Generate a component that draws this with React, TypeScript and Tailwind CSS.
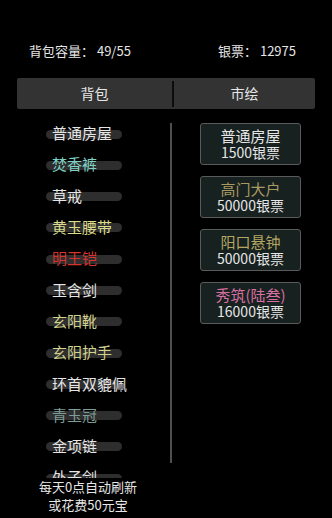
import React from "react";

const items: { name: string; color: string }[] = [
  { name: "普通房屋", color: "text-[#e6e6e6]" },
  { name: "焚香裤", color: "text-[#7fd3c4]" },
  { name: "草戒", color: "text-[#e6e6e6]" },
  { name: "黄玉腰带", color: "text-[#dcdc8c]" },
  { name: "明王铠", color: "text-[#d5342e]" },
  { name: "玉含剑", color: "text-[#e6e6e6]" },
  { name: "玄阳靴", color: "text-[#d2d28c]" },
  { name: "玄阳护手", color: "text-[#d2d28c]" },
  { name: "环首双貔佩", color: "text-[#e6e6e6]" },
  { name: "青玉冠", color: "text-[#7e9c98]" },
  { name: "金项链", color: "text-[#e6e6e6]" },
  { name: "外子剑", color: "text-[#e6e6e6]" },
];

const shop: { name: string; color: string; price: string }[] = [
  { name: "普通房屋", color: "text-[#e6e6e6]", price: "1500银票" },
  { name: "高门大户", color: "text-[#a89a62]", price: "50000银票" },
  { name: "阳口悬钟", color: "text-[#b3a664]", price: "50000银票" },
  { name: "秀筑(陆叁)", color: "text-[#d66fa2]", price: "16000银票" },
];

export default function App() {
  return (
    <div
      className="w-[332px] h-[518px] bg-black overflow-hidden text-[#e6e6e6]"
      style={{ fontFamily: '"Noto Sans CJK SC", "Noto Sans", sans-serif' }}
    >
      <div className="flex justify-between pl-[29px] pr-[36px] pt-[41px] text-[13px] leading-[20px]">
        <span>背包容量：&nbsp;49/55</span>
        <span>银票：&nbsp;12975</span>
      </div>

      <div className="mx-[17px] mt-[17px] h-[31px] bg-[#333333] rounded-[2px] flex items-center text-[14px]">
        <div className="w-[155px] text-center">背包</div>
        <div className="w-[2px] h-[26px] bg-[#0c0c0c]" />
        <div className="flex-1 text-center">市绘</div>
      </div>

      <div className="flex mt-[8.5px]">
        <div className="w-[170px] flex flex-col">
          <div className="h-[360px] overflow-hidden">
            {items.map((it) => (
              <div key={it.name} className="relative h-[31.3px] flex items-center">
                <div className="absolute left-[46px] top-[12px] w-[76px] h-[9px] rounded-full bg-[#2e2e2e]" />
                <span className={`relative ml-[52px] text-[15px] leading-[20px] whitespace-nowrap ${it.color}`}>
                  {it.name}
                </span>
              </div>
            ))}
          </div>
          <div className="text-center text-[13px] leading-[18px] pl-[6px]">
            <div>每天0点自动刷新</div>
            <div>或花费50元宝</div>
          </div>
        </div>

        <div className="w-[2px] h-[340px] mt-[5px] bg-[#505050]" />

        <div className="flex flex-col gap-[11px] ml-[28px] mt-[5px]">
          {shop.map((s) => (
            <div
              key={s.name}
              className="w-[101px] h-[42px] rounded-[3px] border-[1.5px] border-[#5a5a5a] bg-[#17211f] flex flex-col items-center justify-center"
            >
              <span className={`text-[15px] leading-[17px] ${s.color}`}>{s.name}</span>
              <span className="text-[14px] leading-[17px] text-[#e6e6e6]">{s.price}</span>
            </div>
          ))}
        </div>
      </div>
    </div>
  );
}
